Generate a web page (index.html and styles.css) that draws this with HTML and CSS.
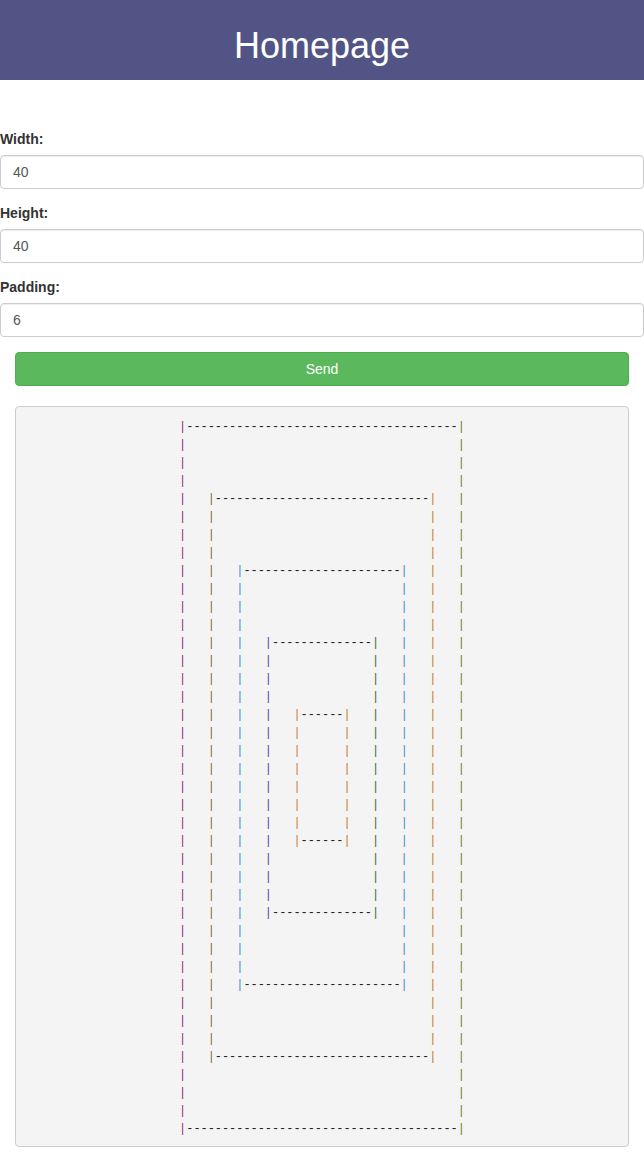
FILE: index.html
```html
<!DOCTYPE html>
<html lang="en">
<head>
<meta charset="utf-8">
<title>Homepage</title>
<link rel="stylesheet" href="styles.css">
</head>
<body>
<header class="topbar">
  <h1>Homepage</h1>
</header>
<form class="form">
  <div class="group">
    <label for="w">Width:</label>
    <input class="field" id="w" type="text" value="40">
  </div>
  <div class="group">
    <label for="h">Height:</label>
    <input class="field" id="h" type="text" value="40">
  </div>
  <div class="group">
    <label for="p">Padding:</label>
    <input class="field" id="p" type="text" value="6">
  </div>
  <div class="actions">
    <button class="send" type="button">Send</button>
    <pre class="art"><span class="a">|</span>--------------------------------------<span class="j">|</span>
<span class="a">|</span>                                      <span class="j">|</span>
<span class="a">|</span>                                      <span class="j">|</span>
<span class="a">|</span>                                      <span class="j">|</span>
<span class="a">|</span>   <span class="b">|</span>------------------------------<span class="i">|</span>   <span class="j">|</span>
<span class="a">|</span>   <span class="b">|</span>                              <span class="i">|</span>   <span class="j">|</span>
<span class="a">|</span>   <span class="b">|</span>                              <span class="i">|</span>   <span class="j">|</span>
<span class="a">|</span>   <span class="b">|</span>                              <span class="i">|</span>   <span class="j">|</span>
<span class="a">|</span>   <span class="b">|</span>   <span class="c">|</span>----------------------<span class="h">|</span>   <span class="i">|</span>   <span class="j">|</span>
<span class="a">|</span>   <span class="b">|</span>   <span class="c">|</span>                      <span class="h">|</span>   <span class="i">|</span>   <span class="j">|</span>
<span class="a">|</span>   <span class="b">|</span>   <span class="c">|</span>                      <span class="h">|</span>   <span class="i">|</span>   <span class="j">|</span>
<span class="a">|</span>   <span class="b">|</span>   <span class="c">|</span>                      <span class="h">|</span>   <span class="i">|</span>   <span class="j">|</span>
<span class="a">|</span>   <span class="b">|</span>   <span class="c">|</span>   <span class="d">|</span>--------------<span class="g">|</span>   <span class="h">|</span>   <span class="i">|</span>   <span class="j">|</span>
<span class="a">|</span>   <span class="b">|</span>   <span class="c">|</span>   <span class="d">|</span>              <span class="g">|</span>   <span class="h">|</span>   <span class="i">|</span>   <span class="j">|</span>
<span class="a">|</span>   <span class="b">|</span>   <span class="c">|</span>   <span class="d">|</span>              <span class="g">|</span>   <span class="h">|</span>   <span class="i">|</span>   <span class="j">|</span>
<span class="a">|</span>   <span class="b">|</span>   <span class="c">|</span>   <span class="d">|</span>              <span class="g">|</span>   <span class="h">|</span>   <span class="i">|</span>   <span class="j">|</span>
<span class="a">|</span>   <span class="b">|</span>   <span class="c">|</span>   <span class="d">|</span>   <span class="e">|</span>------<span class="f">|</span>   <span class="g">|</span>   <span class="h">|</span>   <span class="i">|</span>   <span class="j">|</span>
<span class="a">|</span>   <span class="b">|</span>   <span class="c">|</span>   <span class="d">|</span>   <span class="e">|</span>      <span class="f">|</span>   <span class="g">|</span>   <span class="h">|</span>   <span class="i">|</span>   <span class="j">|</span>
<span class="a">|</span>   <span class="b">|</span>   <span class="c">|</span>   <span class="d">|</span>   <span class="e">|</span>      <span class="f">|</span>   <span class="g">|</span>   <span class="h">|</span>   <span class="i">|</span>   <span class="j">|</span>
<span class="a">|</span>   <span class="b">|</span>   <span class="c">|</span>   <span class="d">|</span>   <span class="e">|</span>      <span class="f">|</span>   <span class="g">|</span>   <span class="h">|</span>   <span class="i">|</span>   <span class="j">|</span>
<span class="a">|</span>   <span class="b">|</span>   <span class="c">|</span>   <span class="d">|</span>   <span class="e">|</span>      <span class="f">|</span>   <span class="g">|</span>   <span class="h">|</span>   <span class="i">|</span>   <span class="j">|</span>
<span class="a">|</span>   <span class="b">|</span>   <span class="c">|</span>   <span class="d">|</span>   <span class="e">|</span>      <span class="f">|</span>   <span class="g">|</span>   <span class="h">|</span>   <span class="i">|</span>   <span class="j">|</span>
<span class="a">|</span>   <span class="b">|</span>   <span class="c">|</span>   <span class="d">|</span>   <span class="e">|</span>      <span class="f">|</span>   <span class="g">|</span>   <span class="h">|</span>   <span class="i">|</span>   <span class="j">|</span>
<span class="a">|</span>   <span class="b">|</span>   <span class="c">|</span>   <span class="d">|</span>   <span class="e">|</span>------<span class="f">|</span>   <span class="g">|</span>   <span class="h">|</span>   <span class="i">|</span>   <span class="j">|</span>
<span class="a">|</span>   <span class="b">|</span>   <span class="c">|</span>   <span class="d">|</span>              <span class="g">|</span>   <span class="h">|</span>   <span class="i">|</span>   <span class="j">|</span>
<span class="a">|</span>   <span class="b">|</span>   <span class="c">|</span>   <span class="d">|</span>              <span class="g">|</span>   <span class="h">|</span>   <span class="i">|</span>   <span class="j">|</span>
<span class="a">|</span>   <span class="b">|</span>   <span class="c">|</span>   <span class="d">|</span>              <span class="g">|</span>   <span class="h">|</span>   <span class="i">|</span>   <span class="j">|</span>
<span class="a">|</span>   <span class="b">|</span>   <span class="c">|</span>   <span class="d">|</span>--------------<span class="g">|</span>   <span class="h">|</span>   <span class="i">|</span>   <span class="j">|</span>
<span class="a">|</span>   <span class="b">|</span>   <span class="c">|</span>                      <span class="h">|</span>   <span class="i">|</span>   <span class="j">|</span>
<span class="a">|</span>   <span class="b">|</span>   <span class="c">|</span>                      <span class="h">|</span>   <span class="i">|</span>   <span class="j">|</span>
<span class="a">|</span>   <span class="b">|</span>   <span class="c">|</span>                      <span class="h">|</span>   <span class="i">|</span>   <span class="j">|</span>
<span class="a">|</span>   <span class="b">|</span>   <span class="c">|</span>----------------------<span class="h">|</span>   <span class="i">|</span>   <span class="j">|</span>
<span class="a">|</span>   <span class="b">|</span>                              <span class="i">|</span>   <span class="j">|</span>
<span class="a">|</span>   <span class="b">|</span>                              <span class="i">|</span>   <span class="j">|</span>
<span class="a">|</span>   <span class="b">|</span>                              <span class="i">|</span>   <span class="j">|</span>
<span class="a">|</span>   <span class="b">|</span>------------------------------<span class="i">|</span>   <span class="j">|</span>
<span class="a">|</span>                                      <span class="j">|</span>
<span class="a">|</span>                                      <span class="j">|</span>
<span class="a">|</span>                                      <span class="j">|</span>
<span class="a">|</span>--------------------------------------<span class="j">|</span></pre>
  </div>
</form>
</body>
</html>
```

FILE: styles.css
```css
html, body {
  margin: 0;
  padding: 0;
}

body {
  font-family: "Liberation Sans", Arial, Helvetica, sans-serif;
  font-size: 14px;
  line-height: 1.42857;
  color: #333;
  background: #fff;
}

.topbar {
  background: #525486;
  color: #fff;
  text-align: center;
  padding: 26px 0 14px;
}

.topbar h1 {
  margin: 0;
  font-size: 36px;
  font-weight: normal;
  line-height: 40px;
}

.form {
  margin: 0;
  padding-top: 50px;
}

.group {
  margin-bottom: 15px;
}

.group label {
  display: inline-block;
  margin-bottom: 5px;
  font-weight: bold;
}

.field {
  display: block;
  width: 100%;
  box-sizing: border-box;
  height: 34px;
  margin: 0;
  padding: 6px 12px;
  font-family: "Liberation Sans", Arial, sans-serif;
  font-size: 14px;
  line-height: 1.42857;
  color: #555;
  background: #fff;
  border: 1px solid #ccc;
  border-radius: 4px;
  box-shadow: inset 0 1px 1px rgba(0, 0, 0, 0.075);
}

.actions {
  padding: 0 15px;
}

.send {
  display: block;
  width: 100%;
  box-sizing: border-box;
  height: 34px;
  margin: 0;
  padding: 7px 12px 5px;
  font-family: "Liberation Sans", Arial, sans-serif;
  font-size: 14px;
  line-height: 1.42857;
  color: #fff;
  background: #5cb85c;
  border: 1px solid #4cae4c;
  border-radius: 4px;
}

.art {
  margin: 20px 0 0;
  padding: 11.5px 9.5px 7.5px;
  font-family: "Liberation Mono", "DejaVu Sans Mono", monospace;
  font-size: 11.92px;
  line-height: 18px;
  color: #222;
  background: #f4f4f4;
  border: 1px solid #ccc;
  border-radius: 4px;
  text-align: center;
  white-space: pre;
  overflow: hidden;
}

.art .a { color: #8a1e80; }
.art .b { color: #7a6a2a; }
.art .c { color: #3a8fc8; }
.art .d { color: #5a40a8; }
.art .e { color: #d07a28; }
.art .f { color: #c87828; }
.art .g { color: #2e6e2c; }
.art .h { color: #3a8cc6; }
.art .i { color: #c07a20; }
.art .j { color: #6a7a2a; }
```
